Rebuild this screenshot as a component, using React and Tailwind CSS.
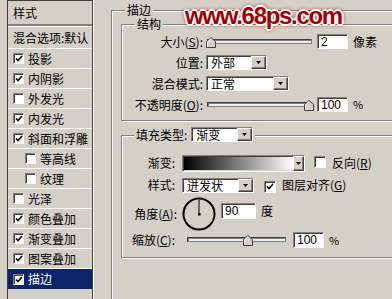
import React from "react";

const Tick = () => (
  <svg width="8" height="7" viewBox="0 0 8 7" className="block">
    <path d="M1 3.5 L3 5.5 L7 1" stroke="#000" strokeWidth="1.6" fill="none" />
  </svg>
);

const Check = ({ checked, big }) => (
  <span
    className={
      "inline-flex shrink-0 items-center justify-center bg-white border border-t-[#808080] border-l-[#808080] border-r-[#fff] border-b-[#fff] shadow-[inset_1px_1px_0_#404040] " +
      (big ? "w-[12px] h-[12px]" : "w-[11px] h-[11px]")
    }
  >
    {checked ? <Tick /> : null}
  </span>
);

const Arrow = ({ narrow }) => (
  <span
    className={
      "flex items-center justify-center h-full bg-[#d4d0c8] border border-t-[#fff] border-l-[#fff] border-r-[#404040] border-b-[#404040] shadow-[inset_-1px_-1px_0_#808080] shrink-0 " +
      (narrow ? "w-[11px]" : "w-[15px]")
    }
  >
    <svg width="5" height="3" viewBox="0 0 5 3" className="block">
      <polygon points="0,0 5,0 2.5,3" fill="#000" />
    </svg>
  </span>
);

const Select = ({ w, text }) => (
  <div
    className={
      "flex h-[15px] bg-white border border-t-[#808080] border-l-[#808080] border-r-[#fff] border-b-[#fff] shadow-[inset_1px_1px_0_#404040] shrink-0 " +
      w
    }
  >
    <span className="flex-1 pl-[4px] leading-[13px] text-[12px]">{text}</span>
    <Arrow />
  </div>
);

const Input = ({ w, h, text }) => (
  <div
    className={
      "flex items-center bg-white border border-t-[#808080] border-l-[#808080] border-r-[#fff] border-b-[#fff] shadow-[inset_1px_1px_0_#404040] pl-[3px] text-[12px] leading-none font-['Liberation_Sans',sans-serif] shrink-0 " +
      w +
      " " +
      h
    }
  >
    {text}
  </div>
);

const Thumb = () => (
  <svg width="10" height="11" viewBox="0 0 10 11" className="block">
    <path d="M5 0.5 L9.5 4.5 L9.5 10.5 L0.5 10.5 L0.5 4.5 Z" fill="#d4d0c8" stroke="#404040" />
    <path d="M1.5 9.5 L1.5 5 L5 1.8" stroke="#fff" fill="none" />
  </svg>
);

const Slider = ({ w, thumb }) => (
  <div className={"relative h-[14px] shrink-0 " + w}>
    <div className="absolute left-[1px] right-0 top-[4px] h-[5px] bg-[#f0f0f0] border border-t-[#404040] border-l-[#404040] border-r-[#808080] border-b-[#808080] shadow-[inset_1px_1px_0_#808080]" />
    <div className={"absolute top-[2px] " + thumb}>
      <Thumb />
    </div>
  </div>
);

const Title = ({ children, cls }) => (
  <span className={"absolute top-[-7px] px-[2px] bg-[#d4d0c8] text-[12px] leading-[12px] " + cls}>
    {children}
  </span>
);

const items = [
  ["投影", true, false, false],
  ["内阴影", true, false, false],
  ["外发光", false, false, false],
  ["内发光", true, false, false],
  ["斜面和浮雕", true, false, false],
  ["等高线", false, true, false],
  ["纹理", false, true, false],
  ["光泽", false, false, false],
  ["颜色叠加", true, false, false],
  ["渐变叠加", true, false, false],
  ["图案叠加", true, false, false],
  ["描边", true, false, true],
];

export default function App() {
  return (
    <div className="relative w-[392px] h-[299px] overflow-hidden bg-[#d4d0c8] flex text-black text-[12px] font-['Noto_Sans_CJK_SC',sans-serif]">
      {/* Left styles list */}
      <div className="ml-[7px] w-[86px] h-[310px] shrink-0 flex flex-col border-l border-t border-r border-[#404040] shadow-[1px_0_0_#fff]">
        <div className="h-[23px] flex items-center pl-[5px] leading-none">样式</div>
        <div className="h-[2px] bg-[#808080]" />
        <div className="h-[1px] bg-white" />
        <div className="h-[22px] flex items-center pl-[5px] border-b border-white leading-none whitespace-nowrap">
          混合选项:默认
        </div>
        {items.map(([label, checked, indent, sel]) => (
          <div
            key={label}
            className={
              "h-[20px] flex items-center gap-[4px] leading-none whitespace-nowrap " +
              (indent ? "pl-[17px] " : "pl-[5px] ") +
              (sel ? "bg-[#0a246a] text-white" : "border-b border-white")
            }
          >
            <Check checked={checked} />
            <span>{label}</span>
          </div>
        ))}
      </div>

      {/* Right area */}
      <div className="flex-1 pl-[18px] pt-[10px]">
        <div className="relative w-[420px] h-[400px] border-l border-t border-[#808080] shadow-[inset_1px_1px_0_#fff] pl-[9px] pt-[13px]">
          <Title cls="left-[13px]">描边</Title>

          {/* 结构 */}
          <div className="relative w-[420px] h-[97px] border border-[#808080] shadow-[inset_1px_1px_0_#fff,1px_1px_0_#fff] pt-[6px]">
            <Title cls="left-[13px]">结构</Title>

            <div className="h-[21px] flex items-center">
              <span className="w-[81px] text-right leading-none">
                大小(<span className="underline">S</span>):
              </span>
              <div className="ml-[3px]">
                <Slider w="w-[106px]" thumb="left-[0px]" />
              </div>
              <div className="ml-[5px]">
                <Input w="w-[31px]" h="h-[15px]" text="2" />
              </div>
              <span className="ml-[5px] leading-none">像素</span>
            </div>

            <div className="h-[21px] flex items-center">
              <span className="w-[81px] text-right leading-none">位置:</span>
              <div className="ml-[3px]">
                <Select w="w-[61px]" text="外部" />
              </div>
            </div>

            <div className="h-[21px] flex items-center">
              <span className="w-[81px] text-right leading-none">混合模式:</span>
              <div className="ml-[3px]">
                <Select w="w-[83px]" text="正常" />
              </div>
            </div>

            <div className="h-[21px] flex items-center">
              <span className="w-[81px] text-right leading-none whitespace-nowrap">
                不透明度(<span className="underline">O</span>):
              </span>
              <div className="ml-[3px]">
                <Slider w="w-[106px]" thumb="left-[98px]" />
              </div>
              <div className="ml-[5px]">
                <Input w="w-[31px]" h="h-[15px]" text="100" />
              </div>
              <span className="ml-[5px] leading-none text-[11px]">%</span>
            </div>
          </div>

          {/* 填充类型 */}
          <div className="relative mt-[14px] w-[420px] h-[123px] border border-[#808080] shadow-[inset_1px_1px_0_#fff,1px_1px_0_#fff] pt-[19px]">
            <div className="absolute left-[12px] top-[-9px] px-[2px] bg-[#d4d0c8] flex items-center gap-[4px]">
              <span className="leading-[15px]">填充类型:</span>
              <Select w="w-[62px]" text="渐变" />
            </div>

            <div className="h-[16px] flex items-center">
              <span className="w-[53px] text-right leading-none">渐变:</span>
              <div className="ml-[7px] flex w-[123px] h-[17px] border border-t-[#808080] border-l-[#808080] border-r-[#fff] border-b-[#fff] shadow-[inset_1px_1px_0_#404040]">
                <div className="flex-1 m-[1px] mr-0 bg-[linear-gradient(to_right,#000,#fff)]" />
                <Arrow narrow />
              </div>
              <div className="ml-[9px]">
                <Check big />
              </div>
              <span className="ml-[6px] leading-none">
                反向(<span className="underline">R</span>)
              </span>
            </div>

            <div className="mt-[6px] h-[16px] flex items-center">
              <span className="w-[53px] text-right leading-none">样式:</span>
              <div className="ml-[7px]">
                <Select w="w-[72px]" text="迸发状" />
              </div>
              <div className="ml-[10px]">
                <Check big checked />
              </div>
              <span className="ml-[6px] leading-none">
                图层对齐(<span className="underline">G</span>)
              </span>
            </div>

            <div className="mt-[4px] h-[34px] flex items-center">
              <span className="w-[55px] text-right leading-none whitespace-nowrap">
                角度(<span className="underline">A</span>):
              </span>
              <svg width="34" height="34" viewBox="0 0 34 34" className="ml-[5px] block shrink-0">
                <circle cx="17" cy="17" r="15.5" stroke="#000" strokeWidth="2" fill="none" />
                <line x1="17" y1="17" x2="17" y2="3" stroke="#000" strokeWidth="1" />
                <rect x="16" y="16" width="2.5" height="2.5" fill="#000" />
              </svg>
              <div className="ml-[5px] self-start mt-[6px]">
                <Input w="w-[35px]" h="h-[16px]" text="90" />
              </div>
              <span className="ml-[5px] self-start mt-[8px] leading-none">度</span>
            </div>

            <div className="mt-[1px] h-[16px] flex items-center">
              <span className="w-[53px] text-right leading-none whitespace-nowrap">
                缩放(<span className="underline">C</span>):
              </span>
              <div className="ml-[11px]">
                <Slider w="w-[100px]" thumb="left-[57px]" />
              </div>
              <div className="ml-[7px]">
                <Input w="w-[31px]" h="h-[16px]" text="100" />
              </div>
              <span className="ml-[5px] leading-none text-[11px]">%</span>
            </div>
          </div>
        </div>
      </div>

      {/* Watermark */}
      <div className="absolute left-[185px] top-[4px] text-[24px] leading-[24px] font-bold tracking-[-1.3px] text-[#a00000] font-['Liberation_Sans',sans-serif] [text-shadow:1px_0_0_#fff,-1px_0_0_#fff,0_1px_0_#fff,0_-1px_0_#fff,1px_1px_0_#fff,-1px_-1px_0_#fff,1px_-1px_0_#fff,-1px_1px_0_#fff,2px_0_0_#fff,-2px_0_0_#fff,0_2px_0_#fff,0_-2px_0_#fff,0_0_4px_#a00000,0_0_5px_#c00000]">
        www.68ps.com
      </div>
    </div>
  );
}
